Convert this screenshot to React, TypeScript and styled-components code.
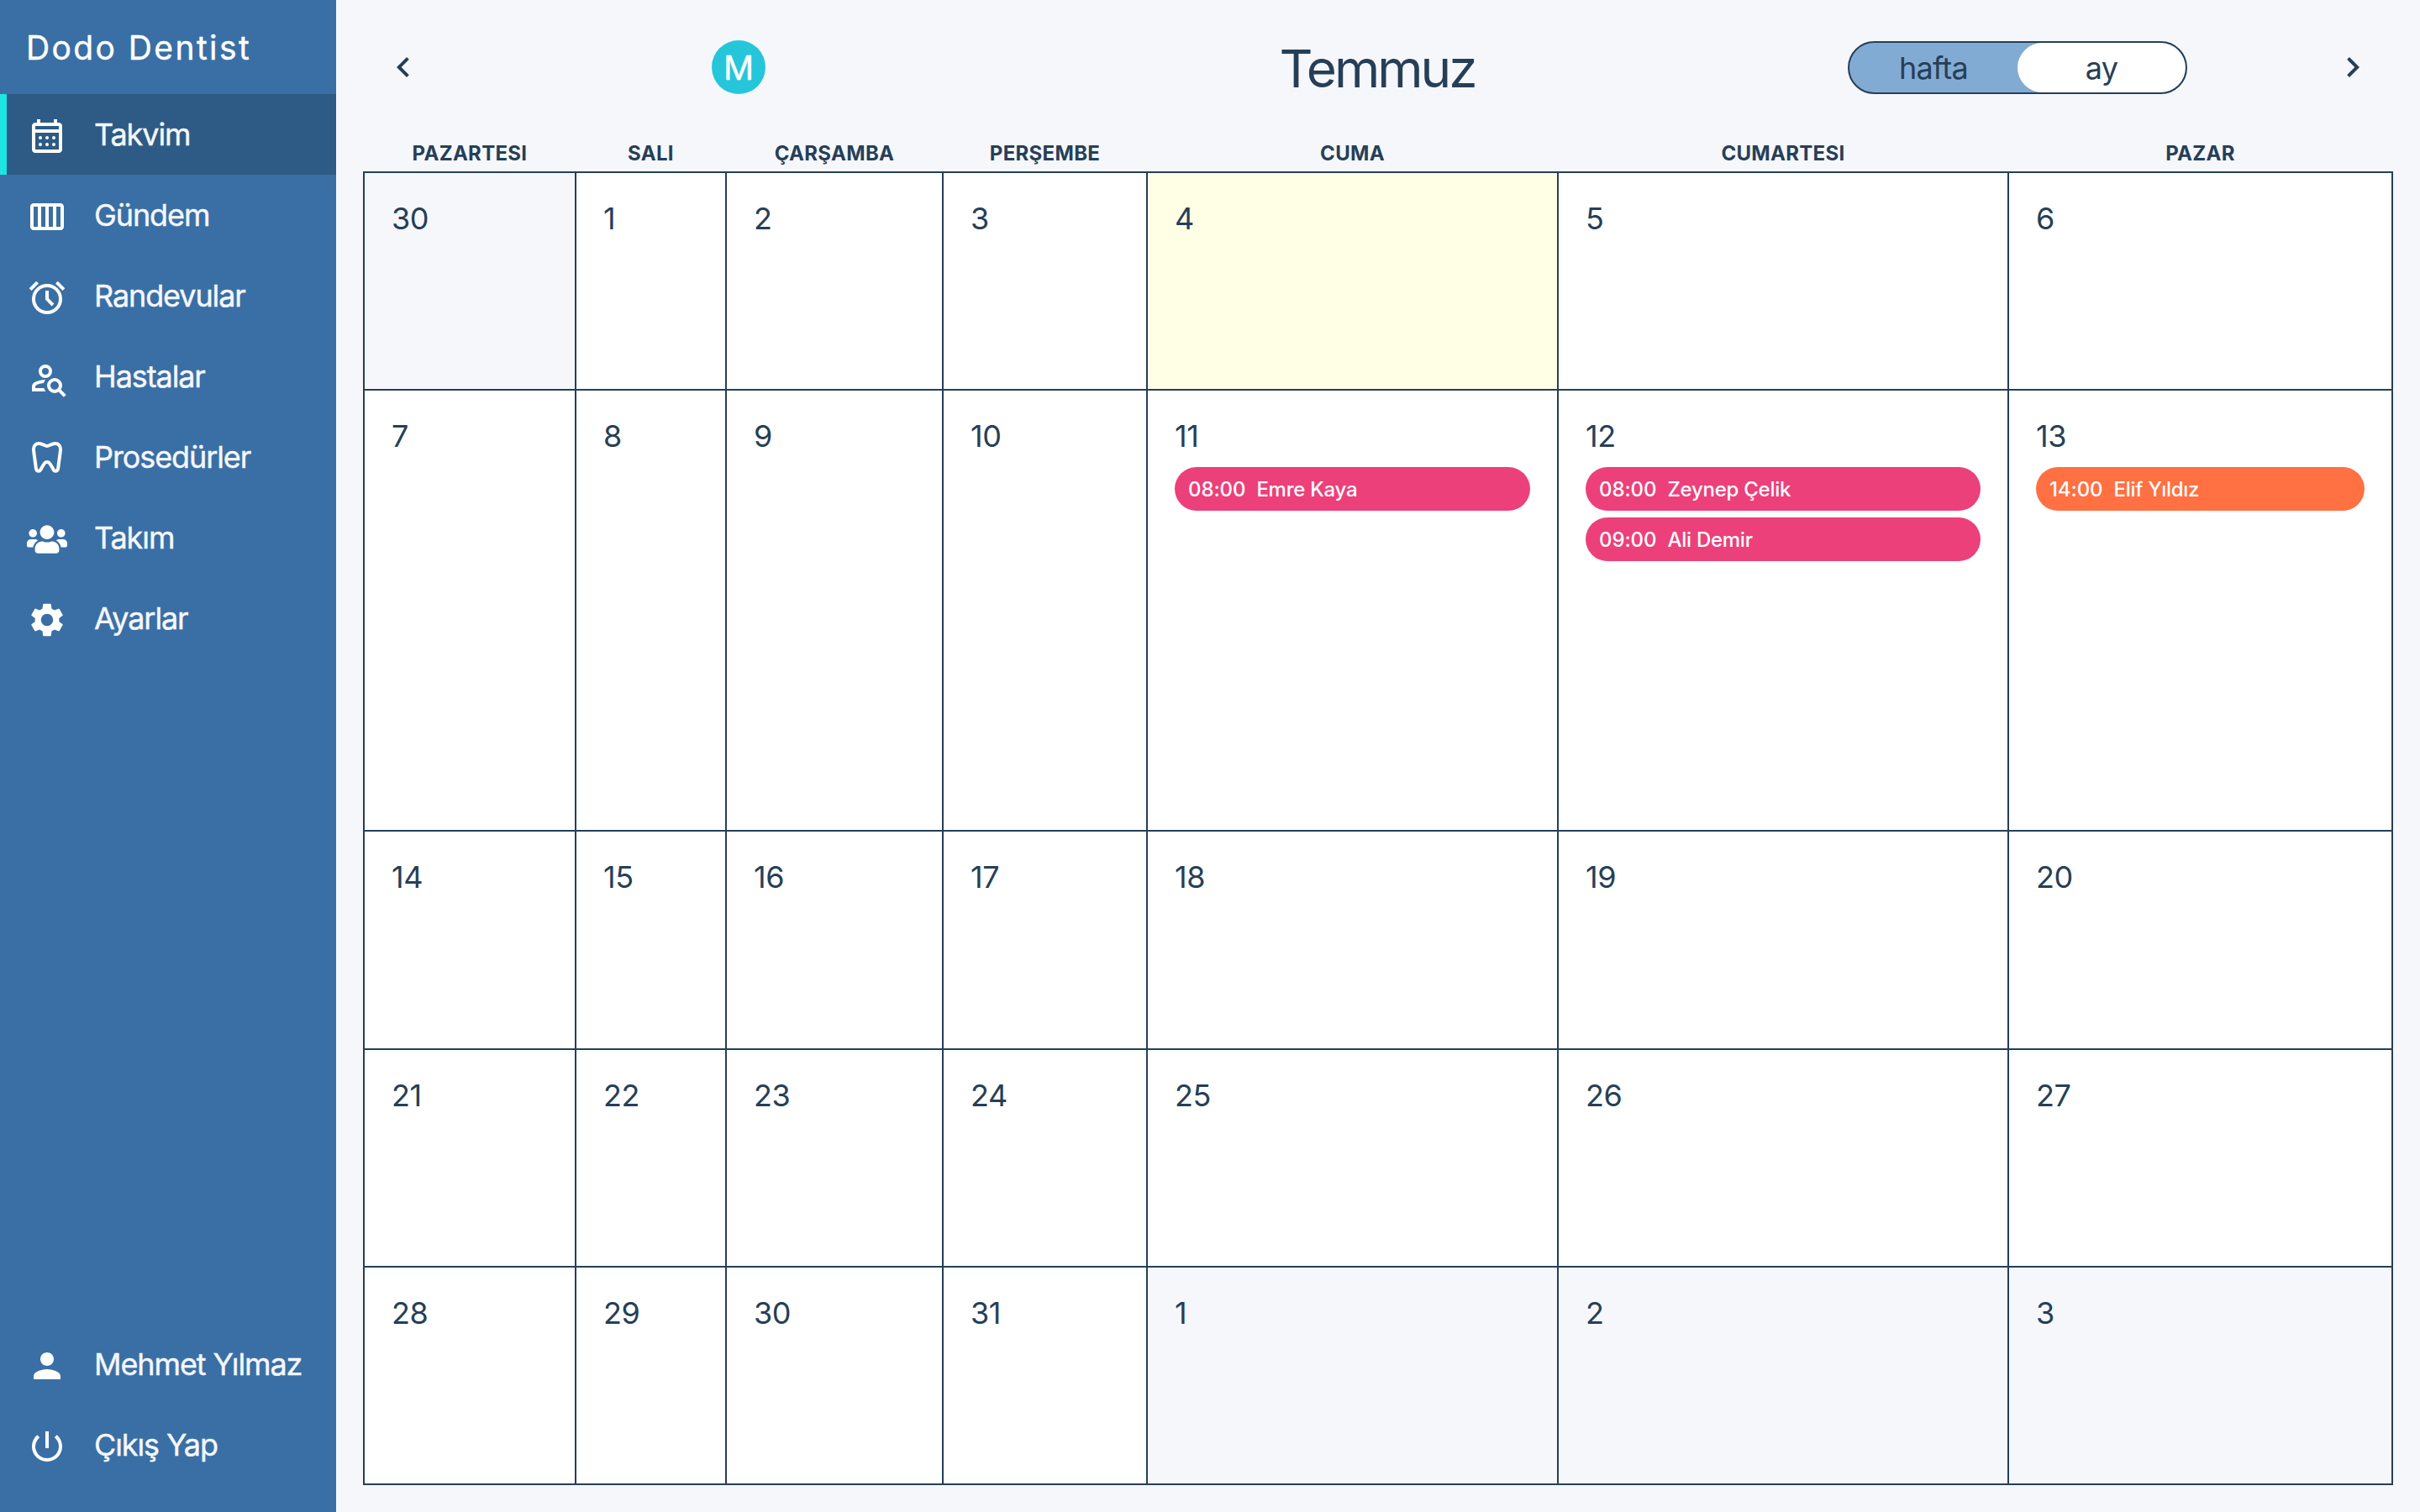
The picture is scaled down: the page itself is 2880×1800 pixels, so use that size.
import React, { useState } from "react";
import styled, { createGlobalStyle } from "styled-components";
import {
  MdChevronLeft,
  MdChevronRight,
  MdPerson,
  MdPowerSettingsNew,
  MdSettings,
} from "react-icons/md";
import { FaUsers } from "react-icons/fa";

const GlobalStyle = createGlobalStyle`
  * {
    box-sizing: border-box;
  }

  body {
    margin: 0;
    background-color: #f6f7fb;
    color: #263f57;
    font-family: Inter, "Liberation Sans", sans-serif;
  }
`;

const Layout = styled.div`
  display: flex;
  width: 2880px;
  height: 1800px;
`;

const Sidebar = styled.nav`
  display: flex;
  flex-direction: column;
  width: 400px;
  padding-bottom: 32px;
  background-color: #3a6fa5;
`;

const Brand = styled.div`
  height: 112px;
  padding: 0 31px;
  color: #ffffff;
  font-size: 39px;
  letter-spacing: 2.4px;
  line-height: 114px;
  -webkit-text-stroke: 0.4px;
`;

const Spacer = styled.div`
  flex: 1;
`;

const NavItem = styled.a<{ $active?: boolean }>`
  display: flex;
  align-items: center;
  height: 96px;
  padding-left: ${({ $active }) => ($active ? "24px" : "32px")};
  border-left: ${({ $active }) => ($active ? "8px solid #1de5e2" : "none")};
  background-color: ${({ $active }) => ($active ? "#2d5b85" : "transparent")};
  color: #f6f7fb;
  cursor: pointer;
`;

const NavIcon = styled.span`
  display: flex;
  width: 48px;
  height: 48px;
  margin: 4px 32px 0 0;
  color: #ffffff;
  font-size: 48px;
`;

const NavLabel = styled.span`
  font-size: 36px;
  letter-spacing: -1.1px;
  line-height: 54px;
  white-space: nowrap;
  -webkit-text-stroke: 0.4px;
`;

const Main = styled.main`
  display: flex;
  flex: 1;
  flex-direction: column;
  padding: 0 32px;
`;

const Toolbar = styled.header`
  display: grid;
  grid-template-columns: 72px 1fr 772px 1fr 72px;
  align-items: center;
  justify-items: center;
  height: 160px;
`;

const ArrowButton = styled.button<{ $side: "left" | "right" }>`
  display: flex;
  justify-self: ${({ $side }) => ($side === "left" ? "end" : "start")};
  padding: 0;
  border: none;
  background: none;
  color: inherit;
  font-size: 48px;
  cursor: pointer;
`;

const Avatar = styled.div`
  width: 64px;
  height: 64px;
  border-radius: 50%;
  background-color: #26c6da;
  color: #ffffff;
  font-size: 40px;
  line-height: 66px;
  text-align: center;
  -webkit-text-stroke: 0.4px;
`;

const Month = styled.h1`
  margin: 4px 2px 0 0;
  font-size: 62px;
  font-weight: 400;
  letter-spacing: -3px;
  line-height: 80px;
`;

const Toggle = styled.div`
  display: flex;
  width: 404px;
  height: 63px;
  margin-top: 1px;
  border: 2px solid #263f57;
  border-radius: 32px;
  background-color: #82abd4;
  overflow: hidden;
`;

const ToggleOption = styled.button<{ $selected: boolean }>`
  flex: 1;
  padding: 0;
  border: none;
  border-radius: 30px;
  background-color: ${({ $selected }) =>
    $selected ? "#ffffff" : "transparent"};
  color: inherit;
  font: inherit;
  font-size: 36px;
  letter-spacing: -0.8px;
  line-height: 61px;
  cursor: pointer;
`;

const columns = "250px 177px 256px 241px 487px 534px 455px";

const Weekdays = styled.div`
  display: grid;
  grid-template-columns: ${columns};
  column-gap: 2px;
  height: 44px;
  padding: 0 2px;
`;

const Weekday = styled.div`
  padding-top: 7px;
  font-size: 24px;
  font-weight: 700;
  letter-spacing: 0.3px;
  line-height: 32px;
  text-align: center;
`;

// The 2px gaps let the dark background through as grid lines
const Grid = styled.div`
  display: grid;
  grid-template-columns: ${columns};
  grid-template-rows: 257px 523px 258px 257px 257px;
  gap: 2px;
  padding: 2px;
  background-color: #263f57;
`;

type DayTone = "muted" | "today" | "plain";

const toneColors: Record<DayTone, string> = {
  muted: "#f6f7fb",
  today: "#ffffe6",
  plain: "#ffffff",
};

const DayCell = styled.div<{ $tone: DayTone }>`
  display: flex;
  flex-direction: column;
  gap: 8px;
  padding: 29px 32px;
  background-color: ${({ $tone }) => toneColors[$tone]};
`;

const DayNumber = styled.div`
  height: 54px;
  font-size: 36px;
  letter-spacing: -0.4px;
  line-height: 51px;
`;

const EventPill = styled.div<{ $color: string }>`
  display: flex;
  gap: 13px;
  height: 52px;
  padding: 0 16px;
  border-radius: 26px;
  background-color: ${({ $color }) => $color};
  color: #ffffff;
  font-size: 24px;
  font-weight: 500;
  line-height: 53px;
  white-space: nowrap;
`;

const EventTime = styled.span`
  letter-spacing: -0.1px;
`;

const EventPatient = styled.span`
  letter-spacing: -0.25px;
`;

const CalendarIcon = () => (
  <svg width="1em" height="1em" viewBox="0 0 24 24" fill="currentColor">
    <path
      fillRule="evenodd"
      d="M5 22q-.825 0-1.412-.587T3 20V6q0-.825.588-1.412T5 4h1V2h2v2h8V2h2v2h1q.825 0 1.413.588T21 6v14q0 .825-.587 1.413T19 22zm0-2h14V10H5zM5 8h14V6H5z"
    />
    <circle cx="8" cy="13" r="1" />
    <circle cx="12" cy="13" r="1" />
    <circle cx="16" cy="13" r="1" />
    <circle cx="8" cy="17" r="1" />
    <circle cx="12" cy="17" r="1" />
    <circle cx="16" cy="17" r="1" />
  </svg>
);

const WeekIcon = () => (
  <svg width="1em" height="1em" viewBox="0 0 24 24" fill="currentColor">
    <path
      fillRule="evenodd"
      d="M4 20q-.825 0-1.412-.587T2 18V6q0-.825.588-1.412T4 4h16q.825 0 1.413.588T22 6v12q0 .825-.587 1.413T20 20zM4 18h2.5V6H4zm4.5 0H11V6H8.5zm4.5 0h2.5V6H13zm4.5 0H20V6h-2.5z"
    />
  </svg>
);

const AlarmIcon = () => (
  <svg width="1em" height="1em" viewBox="0 0 24 24" fill="currentColor">
    <circle cx="12" cy="13" r="8" fill="none" stroke="currentColor" strokeWidth="2" />
    <path d="m14.8 17.2 1.4-1.4-3.2-3.2V8h-2v5.4zM5.6 2.35 7 3.75 2.75 8l-1.4-1.4zm12.8 0 4.25 4.25-1.4 1.4L17 3.75z" />
  </svg>
);

const PatientsIcon = () => (
  <svg
    width="1em"
    height="1em"
    viewBox="0 0 24 24"
    fill="none"
    stroke="currentColor"
    strokeWidth="2"
  >
    <circle cx="11" cy="8" r="3" />
    <circle cx="16.5" cy="16.5" r="3.5" />
    <path d="m18.9 18.9 3.75 3.75" />
    <path
      fill="currentColor"
      stroke="none"
      d="M3 20v-2.775q0-.85.425-1.575t1.175-1.1q1.275-.65 2.875-1.1t3.55-.45q-.35.5-.6.975t-.4 1.05q-1.65.15-2.737.525T5.5 16.35q-.225.125-.362.35T5 17.2v.8h5.2q.15.55.4 1.05t.6.95z"
    />
  </svg>
);

const ToothIcon = () => (
  <svg
    width="1em"
    height="1em"
    viewBox="0 0 24 24"
    fill="none"
    stroke="currentColor"
    strokeWidth="2"
    strokeLinejoin="round"
  >
    <path d="M12 4.5C10.6 4.5 9.4 3 7.2 3 5.2 3 4 4.3 4 6.4c0 1.6.7 5.3 1.4 11.2.2 1.3.7 1.8 1.6 1.8 1 0 1.3-.9 1.8-2l1.5-2.4c.8-1.3 2.6-1.3 3.4 0l1.5 2.4c.5 1.1.8 2 1.8 2 .9 0 1.4-.5 1.6-1.8C19.3 11.7 20 8 20 6.4 20 4.3 18.8 3 16.8 3c-2.2 0-3.4 1.5-4.8 1.5z" />
  </svg>
);

type NavEntry = { label: string; icon: React.ReactNode };

const mainNav: NavEntry[] = [
  { label: "Takvim", icon: <CalendarIcon /> },
  { label: "Gündem", icon: <WeekIcon /> },
  { label: "Randevular", icon: <AlarmIcon /> },
  { label: "Hastalar", icon: <PatientsIcon /> },
  { label: "Prosedürler", icon: <ToothIcon /> },
  { label: "Takım", icon: <FaUsers /> },
  { label: "Ayarlar", icon: <MdSettings /> },
];

const userNav: NavEntry[] = [
  { label: "Mehmet Yılmaz", icon: <MdPerson /> },
  { label: "Çıkış Yap", icon: <MdPowerSettingsNew /> },
];

const weekdays = [
  "PAZARTESI",
  "SALI",
  "ÇARŞAMBA",
  "PERŞEMBE",
  "CUMA",
  "CUMARTESI",
  "PAZAR",
];

type Appointment = { time: string; patient: string; color: string };

const appointments: Record<number, Appointment[]> = {
  11: [{ time: "08:00", patient: "Emre Kaya", color: "#ec407a" }],
  12: [
    { time: "08:00", patient: "Zeynep Çelik", color: "#ec407a" },
    { time: "09:00", patient: "Ali Demir", color: "#ec407a" },
  ],
  13: [{ time: "14:00", patient: "Elif Yıldız", color: "#ff7043" }],
};

const TODAY = 4;
const DAYS_IN_MONTH = 31;

// Starts at 0 for June 30 and runs to 34 for August 3
const days = Array.from({ length: 35 }, (_, i) => i);

const getDayNumber = (day: number) => {
  if (day === 0) return 30;
  return day > DAYS_IN_MONTH ? day - DAYS_IN_MONTH : day;
};

const getTone = (day: number): DayTone => {
  if (day === 0 || day > DAYS_IN_MONTH) return "muted";
  return day === TODAY ? "today" : "plain";
};

type NavLinkProps = {
  entry: NavEntry;
  active?: boolean;
  onClick?: () => void;
};

const NavLink = ({ entry, active, onClick }: NavLinkProps) => (
  <NavItem $active={active} onClick={onClick}>
    <NavIcon>{entry.icon}</NavIcon>
    <NavLabel>{entry.label}</NavLabel>
  </NavItem>
);

const App = () => {
  const [page, setPage] = useState("Takvim");
  const [view, setView] = useState("ay");

  return (
    <>
      <GlobalStyle />
      <Layout>
        <Sidebar>
          <Brand>Dodo Dentist</Brand>
          {mainNav.map((entry) => (
            <NavLink
              key={entry.label}
              entry={entry}
              active={entry.label === page}
              onClick={() => setPage(entry.label)}
            />
          ))}
          <Spacer />
          {userNav.map((entry) => (
            <NavLink key={entry.label} entry={entry} />
          ))}
        </Sidebar>
        <Main>
          <Toolbar>
            <ArrowButton $side="left">
              <MdChevronLeft />
            </ArrowButton>
            <Avatar>M</Avatar>
            <Month>Temmuz</Month>
            <Toggle>
              {["hafta", "ay"].map((option) => (
                <ToggleOption
                  key={option}
                  $selected={option === view}
                  onClick={() => setView(option)}
                >
                  {option}
                </ToggleOption>
              ))}
            </Toggle>
            <ArrowButton $side="right">
              <MdChevronRight />
            </ArrowButton>
          </Toolbar>
          <Weekdays>
            {weekdays.map((name) => (
              <Weekday key={name}>{name}</Weekday>
            ))}
          </Weekdays>
          <Grid>
            {days.map((day) => (
              <DayCell key={day} $tone={getTone(day)}>
                <DayNumber>{getDayNumber(day)}</DayNumber>
                {(appointments[day] ?? []).map((item) => (
                  <EventPill key={item.time} $color={item.color}>
                    <EventTime>{item.time}</EventTime>
                    <EventPatient>{item.patient}</EventPatient>
                  </EventPill>
                ))}
              </DayCell>
            ))}
          </Grid>
        </Main>
      </Layout>
    </>
  );
};

export default App;
